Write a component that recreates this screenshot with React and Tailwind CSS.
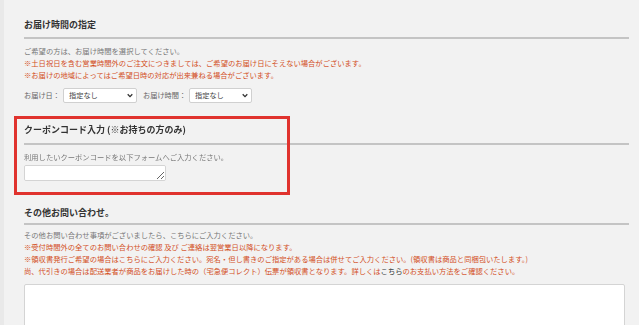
import React from 'react';

const FONT = { fontFamily: '"Noto Sans CJK JP", "Noto Sans", sans-serif' };

function Heading({ children, className = '' }) {
  return (
    <h3 className={`text-[9px] leading-[12px] font-bold text-[#333] border-b-2 border-[#c4c4c4] ${className}`}>
      {children}
    </h3>
  );
}

function Select({ width }) {
  return (
    <div className={`relative ${width} h-[15px]`}>
      <select className="appearance-none w-full h-full bg-white border border-[#d0d0d0] rounded-[2px] pl-[5px] text-[7.2px] leading-[13px] text-[#444] outline-none">
        <option>指定なし</option>
      </select>
      {/* chevron */}
      <svg className="absolute right-[4px] top-[5px] pointer-events-none" width="6" height="5" viewBox="0 0 6 5">
        <path d="M0.7 1.2 L3 3.6 L5.3 1.2" fill="none" stroke="#333" strokeWidth="1.3" />
      </svg>
    </div>
  );
}

export default function App() {
  return (
    <div className="w-[639px] h-[325px] overflow-hidden bg-[#e9e9e9] flex" style={FONT}>
      <div className="ml-[4px] flex-1 bg-[#f2f2f2] pl-[20px] pr-[10px] pt-[19px]">
        {/* ── お届け時間の指定 ── */}
        <section>
          <Heading className="pb-[6px]">お届け時間の指定</Heading>
          <div className="mt-[6px] text-[7.3px] leading-[12px] whitespace-nowrap">
            <p className="text-[#777]">ご希望の方は、お届け時間を選択してください。</p>
            <p className="text-[#d24f24]">※土日祝日を含む営業時間外のご注文につきましては、ご希望のお届け日にそえない場合がございます。</p>
            <p className="text-[#d24f24]">※お届けの地域によってはご希望日時の対応が出来兼ねる場合がございます。</p>
          </div>
          <div className="mt-[7px] flex items-center text-[7.2px] text-[#666]">
            <span className="w-[39px]">お届け日：</span>
            <Select width="w-[74px]" />
            <span className="ml-[6px] w-[46px]">お届け時間：</span>
            <Select width="w-[63px]" />
          </div>
        </section>

        {/* ── クーポンコード入力 ── */}
        <section className="relative mt-[21px]">
          <Heading className="pb-[7px]">クーポンコード入力 (※お持ちの方のみ)</Heading>
          <p className="mt-[6px] text-[7.3px] leading-[12px] text-[#777]">利用したいクーポンコードを以下フォームへご入力ください。</p>
          <textarea className="mt-[2px] block w-[142px] h-[16px] bg-white border border-[#d4d4d4] rounded-[2px] outline-none" />
          {/* annotation frame */}
          <div className="absolute left-[-10px] top-[-8px] w-[276px] h-[79px] border-[3px] border-[#e0332e] pointer-events-none" />
        </section>

        {/* ── その他お問い合わせ ── */}
        <section className="mt-[26px]">
          <Heading className="pb-[4px]">その他お問い合わせ。</Heading>
          <div className="mt-[4px] text-[7.3px] leading-[12px] whitespace-nowrap">
            <p className="text-[#777]">その他お問い合わせ事項がございましたら、こちらにご入力ください。</p>
            <p className="text-[#d24f24]">※受付時間外の全てのお問い合わせの確認 及び ご連絡は翌営業日以降になります。</p>
            <p className="text-[#d24f24]">※領収書発行ご希望の場合はこちらにご入力ください。宛名・但し書きのご指定がある場合は併せてご入力ください。(領収書は商品と同梱包いたします。)</p>
            <p className="text-[#d24f24]">
              尚、代引きの場合は配送業者が商品をお届けした時の（宅急便コレクト）伝票が領収書となります。詳しくは
              <span className="text-[#333]">こちら</span>
              のお支払い方法をご確認ください。
            </p>
          </div>
          <textarea className="mt-[7px] block w-[601px] h-[80px] bg-white border border-[#d4d4d4] rounded-[2px] outline-none resize-none" />
        </section>
      </div>
    </div>
  );
}
